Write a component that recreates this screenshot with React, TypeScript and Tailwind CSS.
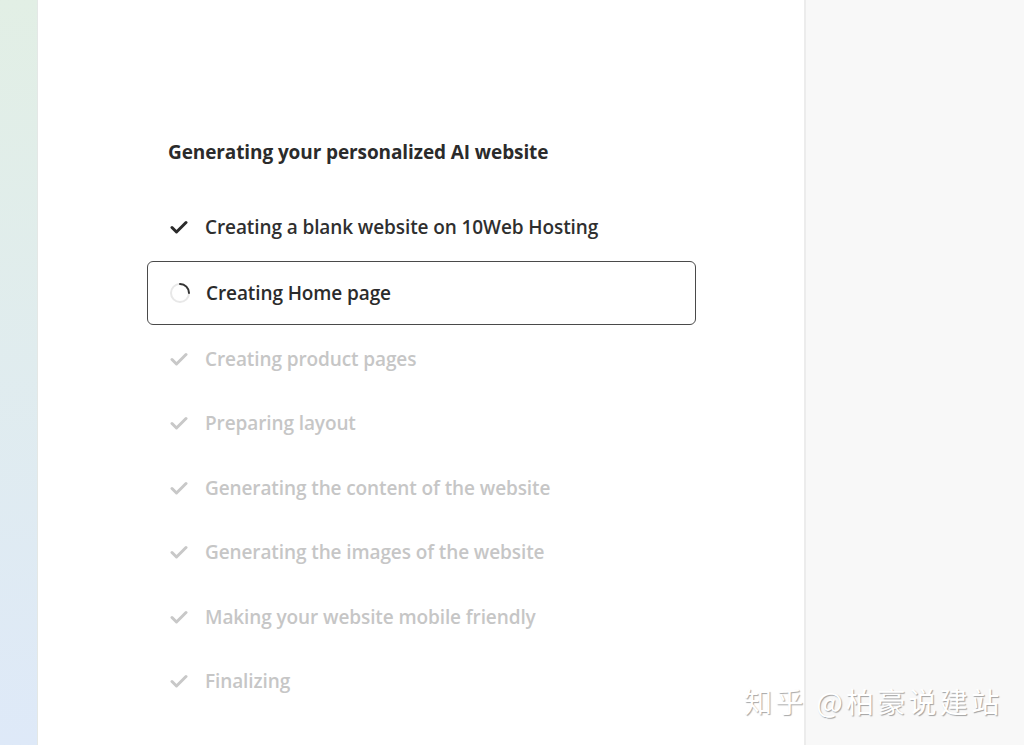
import React from 'react';

const steps = [
  'Creating product pages',
  'Preparing layout',
  'Generating the content of the website',
  'Generating the images of the website',
  'Making your website mobile friendly',
  'Finalizing',
];

function Check({ className }: { className: string }) {
  return (
    <svg viewBox="0 0 18 14" className={className} fill="none">
      <path d="M2 7.5L6.5 12L16 2.5" stroke="currentColor" strokeWidth="3" strokeLinecap="round" strokeLinejoin="round" />
    </svg>
  );
}

function Spinner() {
  return (
    <svg viewBox="0 0 22 22" className="w-[22px] h-[22px]" fill="none">
      <circle cx="11" cy="11" r="9" stroke="#e8e8e8" strokeWidth="2" />
      <path d="M11 2A9 9 0 0 1 20 11" stroke="#333" strokeWidth="2" strokeLinecap="round" />
    </svg>
  );
}

export default function App() {
  return (
    <div className="w-[1024px] h-[745px] flex overflow-hidden relative" style={{ fontFamily: '"Open Sans", sans-serif' }}>
      {/* left gradient strip */}
      <div className="w-[38px] h-full bg-gradient-to-b from-[#e2efe5] to-[#dee9f8] border-r border-[#e4e8e6]" />

      {/* main panel */}
      <div className="w-[766px] h-full bg-white pl-[130px] pt-[139px]">
        <h1 className="text-[19px] font-bold text-[#2b2b2b] leading-[26px] tracking-[-0.1px]">
          Generating your personalized AI website
        </h1>

        <div className="mt-[49px] flex items-center h-[26px] pl-[2px] text-[#2f2f2f]">
          <Check className="w-[18px] h-[14px] text-[#2a2a2a]" />
          <span className="ml-[17px] text-[19px] font-semibold leading-[26px] tracking-[-0.1px]">
            Creating a blank website on 10Web Hosting
          </span>
        </div>

        <div className="mt-[21px] -ml-[21px] w-[549px] h-[64px] border-[1.5px] border-[#4a4a4a] rounded-[6px] flex items-center pl-[21px]">
          <Spinner />
          <span className="ml-[15px] text-[19px] font-semibold text-[#2b2b2b] leading-[26px] tracking-[-0.1px]">
            Creating Home page
          </span>
        </div>

        <div className="mt-[21px] flex flex-col gap-[38.4px]">
          {steps.map((s) => (
            <div key={s} className="flex items-center h-[26px] pl-[2px]">
              <Check className="w-[18px] h-[14px] text-[#c8c8c8]" />
              <span className="ml-[17px] text-[19px] font-semibold text-[#c6c6c6] leading-[26px] tracking-[-0.1px]">
                {s}
              </span>
            </div>
          ))}
        </div>
      </div>

      {/* right panel */}
      <div className="flex-1 h-full bg-[#f8f8f8] border-l-2 border-[#ececec]" />

      {/* watermark */}
      <div
        className="absolute left-[744px] top-[682px] text-[28px] text-white tracking-[3.3px] leading-[38px]"
        style={{ fontFamily: '"Noto Sans CJK SC", sans-serif', textShadow: '1px 1px 1px rgba(0,0,0,0.35)' }}
      >
        知乎 @柏豪说建站
      </div>
    </div>
  );
}
